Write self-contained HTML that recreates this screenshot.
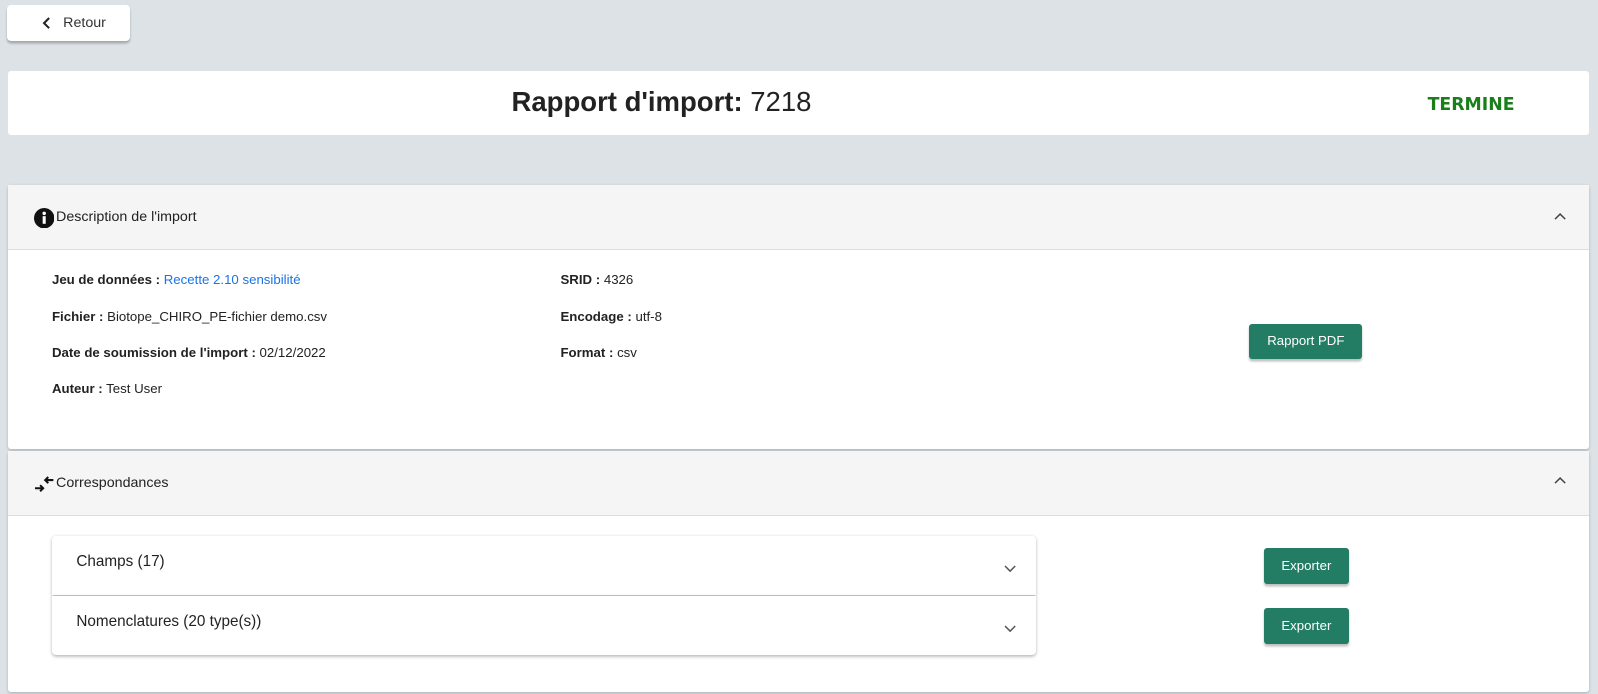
<!DOCTYPE html>
<html><head><style>
html,body{margin:0;width:1598px;height:694px;overflow:hidden}
body{background:#dce2e6;font-family:"Liberation Sans",sans-serif;color:#222;}
#w{position:relative;zoom:1.019;width:1568px;height:681px}
.abs{position:absolute}
.btn-back{left:7px;top:5px;width:121px;height:35px;background:#fff;border-radius:4px;box-shadow:0 2px 2px rgba(0,0,0,.25);font-size:14px;color:#333}
.title{left:8px;top:70px;width:1551px;height:62px;background:#fff;border-radius:3px}
.card{left:8px;width:1551px;background:#fff;box-shadow:0 1px 3px rgba(0,0,0,.2);border-radius:3px}
.hdr{height:62px;background:#f5f5f5;border-bottom:1px solid #ddd;position:relative;font-size:14px}
.lbl{font-size:13px;position:absolute}
.lbl b{font-weight:bold}
.green{background:#237c64;color:#fff;font-size:13px;border-radius:3px;box-shadow:0 2px 2px rgba(0,0,0,.25);text-align:center}
.panel{background:#fff;box-shadow:0 1px 3px rgba(0,0,0,.3);font-size:15px;color:#222}
</style></head><body><div id="w">
<div class="abs btn-back"><svg class="abs" style="left:34px;top:12px" width="10" height="12"><path d="M7 1L2 6l5 5" stroke="#222" stroke-width="2" fill="none"/></svg><span class="abs" style="left:55px;top:10px">Retour</span></div>
<div class="abs title"><div class="abs" style="left:494px;top:14px;font-size:27px;"><b>Rapport d'import:</b> 7218</div><div class="abs" style="left:1393px;top:23px;font-size:17px;font-weight:bold;color:#1a7f1a;font-family:'DejaVu Sans',sans-serif">TERMINE</div></div>

<div class="abs card" style="top:182px;height:259px">
<div class="hdr"><svg class="abs" style="left:25px;top:22px" width="20" height="20"><circle cx="10" cy="10" r="10" fill="#111"/><rect x="8.5" y="8" width="3" height="7.5" fill="#fff"/><circle cx="10" cy="5.3" r="1.7" fill="#fff"/></svg><span class="abs" style="left:47px;top:23px">Description de l'import</span><svg class="abs" style="left:1517px;top:26px" width="12" height="8"><path d="M1 7l5-5 5 5" stroke="#444" stroke-width="1.5" fill="none"/></svg></div>
<div class="lbl" style="left:43px;top:85px"><b>Jeu de données :</b> <span style="color:#1a73e8">Recette 2.10 sensibilité</span></div>
<div class="lbl" style="left:43px;top:121px"><b>Fichier :</b> Biotope_CHIRO_PE-fichier demo.csv</div>
<div class="lbl" style="left:43px;top:157px"><b>Date de soumission de l'import :</b> 02/12/2022</div>
<div class="lbl" style="left:43px;top:192px"><b>Auteur :</b> Test User</div>
<div class="lbl" style="left:542px;top:85px"><b>SRID :</b> 4326</div>
<div class="lbl" style="left:542px;top:121px"><b>Encodage :</b> utf-8</div>
<div class="lbl" style="left:542px;top:157px"><b>Format :</b> csv</div>
<div class="abs green" style="left:1218px;top:136px;width:111px;height:34px;line-height:34px">Rapport PDF</div>
</div>

<div class="abs card" style="top:443px;height:236px">
<div class="hdr"><svg class="abs" style="left:25px;top:24px" width="20" height="16"><path d="M1 12h8M6 9l3 3-3 3M19 4h-8M14 1l-3 3 3 3" stroke="#111" stroke-width="2" fill="none"/></svg><span class="abs" style="left:47px;top:23px">Correspondances</span><svg class="abs" style="left:1517px;top:24px" width="12" height="8"><path d="M1 7l5-5 5 5" stroke="#444" stroke-width="1.5" fill="none"/></svg></div>
<div class="abs panel" style="left:43px;top:83px;width:966px;height:58px;border-radius:4px 4px 0 0"><span class="abs" style="left:24px;top:17px">Champs (17)</span><svg class="abs" style="left:934px;top:28px" width="12" height="8"><path d="M1 1l5 5 5-5" stroke="#555" stroke-width="1.5" fill="none"/></svg></div>
<div class="abs panel" style="left:43px;top:142px;width:966px;height:58px;border-radius:0 0 4px 4px"><span class="abs" style="left:24px;top:17px">Nomenclatures (20 type(s))</span><svg class="abs" style="left:934px;top:28px" width="12" height="8"><path d="M1 1l5 5 5-5" stroke="#555" stroke-width="1.5" fill="none"/></svg></div>
<div class="abs green" style="left:1232px;top:95px;width:84px;height:35px;line-height:35px">Exporter</div>
<div class="abs green" style="left:1232px;top:154px;width:84px;height:35px;line-height:35px">Exporter</div>
</div>
</div></body></html>
